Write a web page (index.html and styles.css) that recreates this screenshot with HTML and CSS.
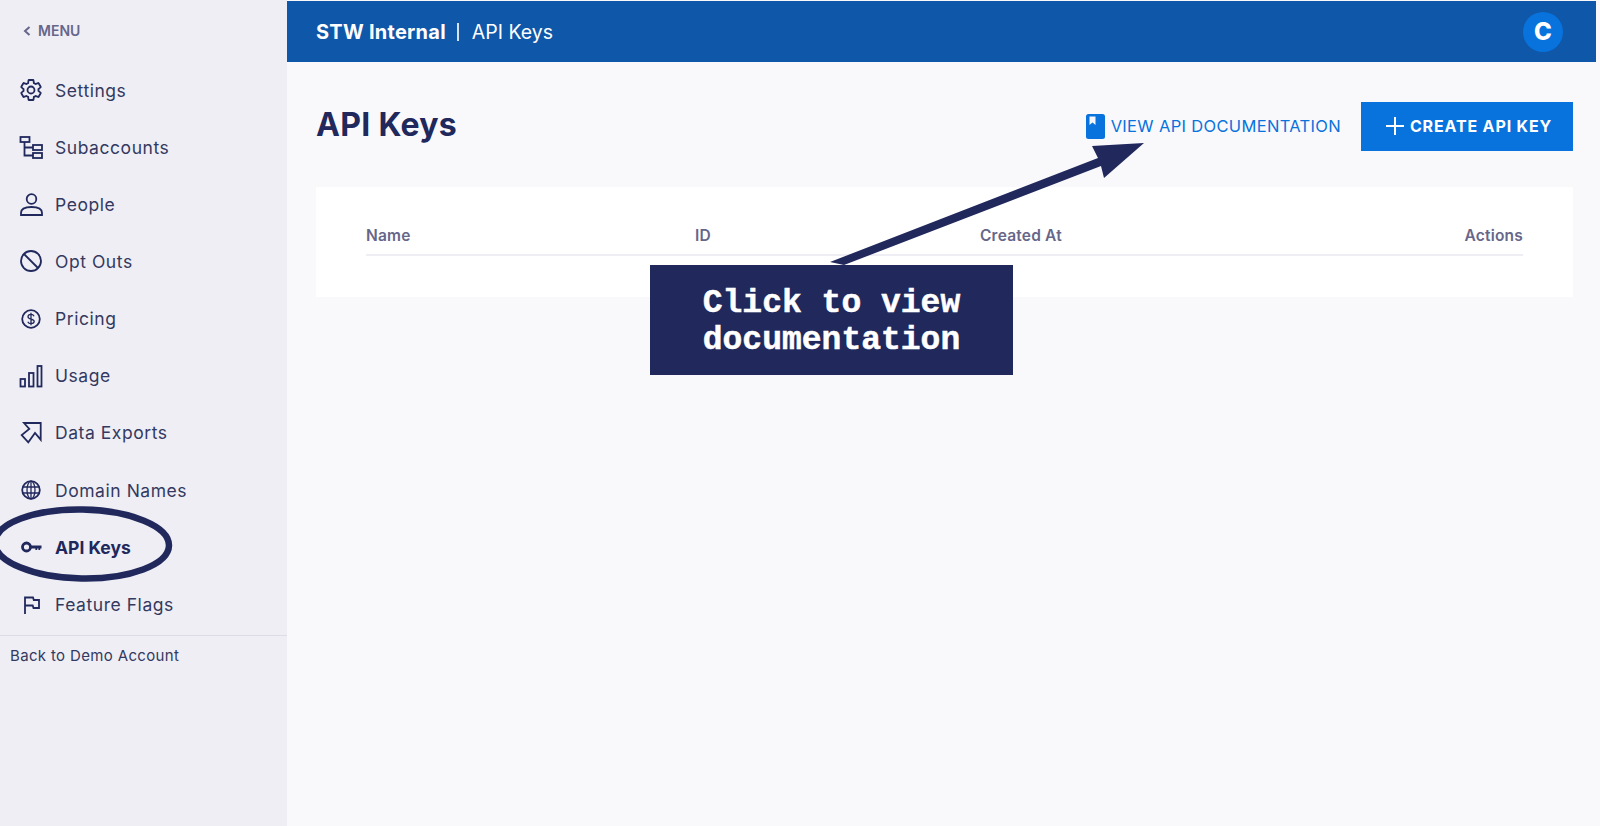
FILE: index.html
```html
<!DOCTYPE html>
<html lang="en">
<head>
    <meta charset="UTF-8">
    <meta name="viewport" content="width=device-width, initial-scale=1.0">
    <title>API Keys</title>
    <link rel="stylesheet" href="styles.css">
</head>
<body>
    <aside class="sidebar">
        <div class="menu-toggle">
            <svg class="menu-chevron" viewBox="0 0 8 10"><path d="M6.500 1 2 5l4.500 4"/></svg>
            <span>MENU</span>
        </div>

        <nav class="nav">
            <a class="nav-item">
                <svg class="nav-icon" viewBox="0 0 24 24"><path d="M19.43 12.98c.04-.32.07-.64.07-.98 0-.34-.03-.66-.07-.98l2.11-1.65c.19-.15.24-.42.12-.64l-2-3.46c-.12-.22-.39-.3-.61-.22l-2.49 1c-.52-.4-1.08-.73-1.69-.98l-.38-2.65C14.46 2.18 14.25 2 14 2h-4c-.25 0-.46.18-.49.42l-.38 2.65c-.61.25-1.17.59-1.69.98l-2.49-1c-.23-.09-.49 0-.61.22l-2 3.46c-.13.22-.07.49.12.64l2.11 1.65c-.04.32-.07.65-.07.98 0 .33.03.66.07.98l-2.11 1.65c-.19.15-.24.42-.12.64l2 3.46c.12.22.39.3.61.22l2.49-1c.52.4 1.08.73 1.69.98l.38 2.65c.03.24.24.42.49.42h4c.25 0 .46-.18.49-.42l.38-2.65c.61-.25 1.17-.59 1.69-.98l2.49 1c.23.09.49 0 .61-.22l2-3.46c.12-.22.07-.49-.12-.64l-2.11-1.65z"/><circle cx="12" cy="12" r="3.5"/></svg>
                <span>Settings</span>
            </a>
            <a class="nav-item">
                <svg class="nav-icon" viewBox="0 0 24 24"><rect x="1.500" y="2" width="9" height="5"/><path d="M5.500 7v13.500H14M5.500 12.500H14"/><rect x="14" y="10" width="9" height="5"/><rect x="14" y="18" width="9" height="5"/></svg>
                <span>Subaccounts</span>
            </a>
            <a class="nav-item">
                <svg class="nav-icon" viewBox="0 0 24 24"><circle cx="12.500" cy="7" r="4.800"/><path d="M2 23v-2c0-4 4-6 10.500-6S23 17 23 21v2z"/></svg>
                <span>People</span>
            </a>
            <a class="nav-item">
                <svg class="nav-icon" viewBox="0 0 24 24"><circle cx="12" cy="12" r="10"/><path d="m5 5 14 14"/></svg>
                <span>Opt Outs</span>
            </a>
            <a class="nav-item">
                <svg class="nav-icon" viewBox="0 0 24 24"><circle cx="12" cy="12" r="8.800"/><path class="thin" d="M15 9.200c-.5-1.200-1.600-1.800-3-1.800-1.700 0-3 .9-3 2.300 0 3.200 6.200 1.500 6.200 4.600 0 1.400-1.400 2.300-3.200 2.300-1.500 0-2.700-.7-3.200-1.900M12 5.800v12.400"/></svg>
                <span>Pricing</span>
            </a>
            <a class="nav-item">
                <svg class="nav-icon" viewBox="0 0 24 24"><rect x="1.500" y="15" width="4.500" height="7.500"/><rect x="10" y="9" width="4.500" height="13.500"/><rect x="18.500" y="2" width="4" height="20.500"/></svg>
                <span>Usage</span>
            </a>
            <a class="nav-item">
                <svg class="nav-icon" viewBox="0 0 24 24"><path d="M21.700 2v16.700L16 12l-6.700 9.300L2.700 14l7.600-6L5 2z"/></svg>
                <span>Data Exports</span>
            </a>
            <a class="nav-item">
                <svg class="nav-icon" viewBox="0 0 24 24"><circle cx="12" cy="12" r="8.800"/><ellipse class="thin" cx="12" cy="12" rx="4" ry="8.800"/><path class="thin" d="M3.500 9h17M3.500 15h17M12 3v18"/></svg>
                <span>Domain Names</span>
            </a>
            <a class="nav-item nav-item-active">
                <svg class="nav-icon" viewBox="0 0 24 24"><circle cx="7.500" cy="12" r="4"/><path class="solid" d="M11 10.400h11.500v3h-1.300v1.600h-1.800v-1.600h-1.200v1.600h-1.800v-1.600H11z"/></svg>
                <span>API Keys</span>
            </a>
            <a class="nav-item">
                <svg class="nav-icon" viewBox="0 0 24 24"><path d="M6 22V5.500h8l.8 2.500H20v8h-5.500l-.8-2.500H6"/></svg>
                <span>Feature Flags</span>
            </a>
        </nav>

        <div class="back-link">Back to Demo Account</div>

        <svg class="nav-circle" viewBox="0 0 180 84"><ellipse cx="82" cy="42" rx="87" ry="34.500" transform="rotate(1 82 42)"/></svg>
    </aside>

    <main class="main">
        <header class="topbar">
            <div class="topbar-title">
                <strong>STW Internal</strong>
                <span class="topbar-sep"></span>
                <span>API Keys</span>
            </div>
            <div class="avatar">C</div>
        </header>

        <section class="content">
            <div class="page-head">
                <h1>API Keys</h1>
                <div class="page-actions">
                    <a class="docs-link">
                        <svg class="docs-icon" viewBox="0 0 19 25"><rect width="19" height="25" rx="2.500"/><path class="docs-mark" d="M3.500 2.500h6v8.500l-3-2.500-3 2.500z"/></svg>
                        <span>VIEW API DOCUMENTATION</span>
                    </a>
                    <button class="create-btn">
                        <svg class="plus-icon" viewBox="0 0 18 18"><path d="M9 0v18M0 9h18"/></svg>
                        <span>CREATE API KEY</span>
                    </button>
                </div>
            </div>

            <div class="card">
                <div class="table-head">
                    <div>Name</div>
                    <div>ID</div>
                    <div>Created At</div>
                    <div>Actions</div>
                </div>
            </div>
        </section>
    </main>

    <!-- annotation drawn over the page -->
    <svg class="callout-arrow" viewBox="0 0 330 135"><path d="M10 127 278 23 272 11 324 8 284 43 281 31 24 130z"/></svg>
    <div class="callout">Click to view<br>documentation</div>
</body>
</html>
```

FILE: styles.css
```css
* {
    box-sizing: border-box;
}
body {
    margin: 0;
    height: 826px;
    overflow: hidden;
    display: flex;
    font-family: Inter, "Open Sans", sans-serif;
    color: #20285c;
    background-color: #f9f9fb;
}
.sidebar {
    position: relative;
    width: 287px;
    flex-shrink: 0;
    background-color: #efeef5;
    overflow: hidden;
}
.menu-toggle {
    display: flex;
    align-items: center;
    height: 61.5px;
    padding-left: 23px;
    gap: 7px;
    font-size: 14px;
    font-weight: 600;
    color: #66668a;
}
.menu-chevron {
    width: 8px;
    height: 10px;
    fill: none;
    stroke: #66668a;
    stroke-width: 2;
}
.nav {
    display: flex;
    flex-direction: column;
    border-bottom: 1px solid #dcdce6;
    padding-bottom: 2px;
}
.nav-item {
    display: flex;
    align-items: center;
    gap: 12px;
    height: 57.15px;
    padding-left: 19px;
    font-size: 17.5px;
    letter-spacing: 0.55px;
    color: #33395f;
}
.nav-item-active {
    font-weight: 700;
    letter-spacing: 0;
    color: #20285c;
}
.nav-icon {
    width: 24px;
    height: 24px;
    flex-shrink: 0;
    fill: none;
    stroke: #20285c;
    stroke-width: 1.8;
}
.nav-icon .thin {
    stroke-width: 1.3;
}
.nav-icon .solid {
    fill: #20285c;
    stroke: none;
}
.nav-item-active .nav-icon {
    stroke-width: 2.8;
}
.back-link {
    padding: 10px 0 0 10px;
    font-size: 15px;
    letter-spacing: 0.35px;
    color: #33395f;
}
.nav-circle {
    position: absolute;
    left: 0;
    top: 502px;
    width: 180px;
    height: 84px;
    fill: none;
    stroke: #20285c;
    stroke-width: 6.5;
}
.main {
    flex: 1;
    min-width: 0;
}
.topbar {
    display: flex;
    align-items: center;
    justify-content: space-between;
    height: 61px;
    margin: 1px 4px 0 0;
    padding: 0 33px 0 29px;
    background-color: #0f57a9;
    color: #fff;
}
.topbar-title {
    display: flex;
    align-items: center;
    font-size: 19.5px;
}
.topbar-title strong {
    font-size: 20px;
    font-weight: 700;
    letter-spacing: 0.25px;
}
.topbar-sep {
    width: 2px;
    height: 18px;
    margin: 0 13px 0 11px;
    background-color: #d5e2f2;
}
.avatar {
    display: flex;
    align-items: center;
    justify-content: center;
    width: 40px;
    height: 40px;
    border-radius: 50%;
    background-color: #0872dd;
    font-size: 24px;
    font-weight: 800;
}
.content {
    padding: 40px 27px 0 29px;
}
.page-head {
    display: flex;
    align-items: center;
    justify-content: space-between;
    height: 49px;
}
h1 {
    margin: 0;
    padding-bottom: 5px;
    font-size: 32px;
    font-weight: 700;
    letter-spacing: 0.3px;
    color: #20285c;
}
.page-actions {
    display: flex;
    align-items: center;
    gap: 20px;
}
.docs-link {
    display: flex;
    align-items: center;
    gap: 6px;
    padding-bottom: 1px;
    font-size: 16.5px;
    font-weight: 400;
    letter-spacing: 0.33px;
    color: #0872dd;
}
.docs-icon {
    width: 19px;
    height: 25px;
    fill: #0872dd;
}
.docs-mark {
    fill: #f2f6fc;
}
.create-btn {
    display: flex;
    align-items: center;
    justify-content: center;
    gap: 6px;
    width: 212px;
    height: 49px;
    padding: 0 0 1px 4px;
    border: none;
    background-color: #0872dd;
    color: #fff;
    font-family: inherit;
    font-size: 16px;
    font-weight: 700;
    letter-spacing: 0.85px;
}
.plus-icon {
    width: 18px;
    height: 18px;
    fill: none;
    stroke: #fff;
    stroke-width: 2;
}
.card {
    height: 110px;
    margin-top: 36px;
    padding: 36px 50px 0;
    background-color: #fff;
}
.table-head {
    display: grid;
    grid-template-columns: 329px 285px 1fr auto;
    height: 33px;
    align-items: center;
    border-bottom: 2px solid #efeef5;
    padding-bottom: 7px;
    font-size: 15.5px;
    font-weight: 600;
    letter-spacing: 0.2px;
    color: #66668a;
}
.callout {
    position: absolute;
    left: 650px;
    top: 265px;
    width: 363px;
    height: 110px;
    display: flex;
    align-items: center;
    justify-content: center;
    padding-top: 3px;
    text-align: center;
    background-color: #20285c;
    color: #fff;
    font-family: "Liberation Mono", "DejaVu Sans Mono", monospace;
    font-size: 33px;
    font-weight: 700;
    line-height: 37px;
    -webkit-text-stroke: 0.5px #fff;
}
.callout-arrow {
    position: absolute;
    left: 820px;
    top: 135px;
    width: 330px;
    height: 135px;
    fill: #20285c;
}
```
